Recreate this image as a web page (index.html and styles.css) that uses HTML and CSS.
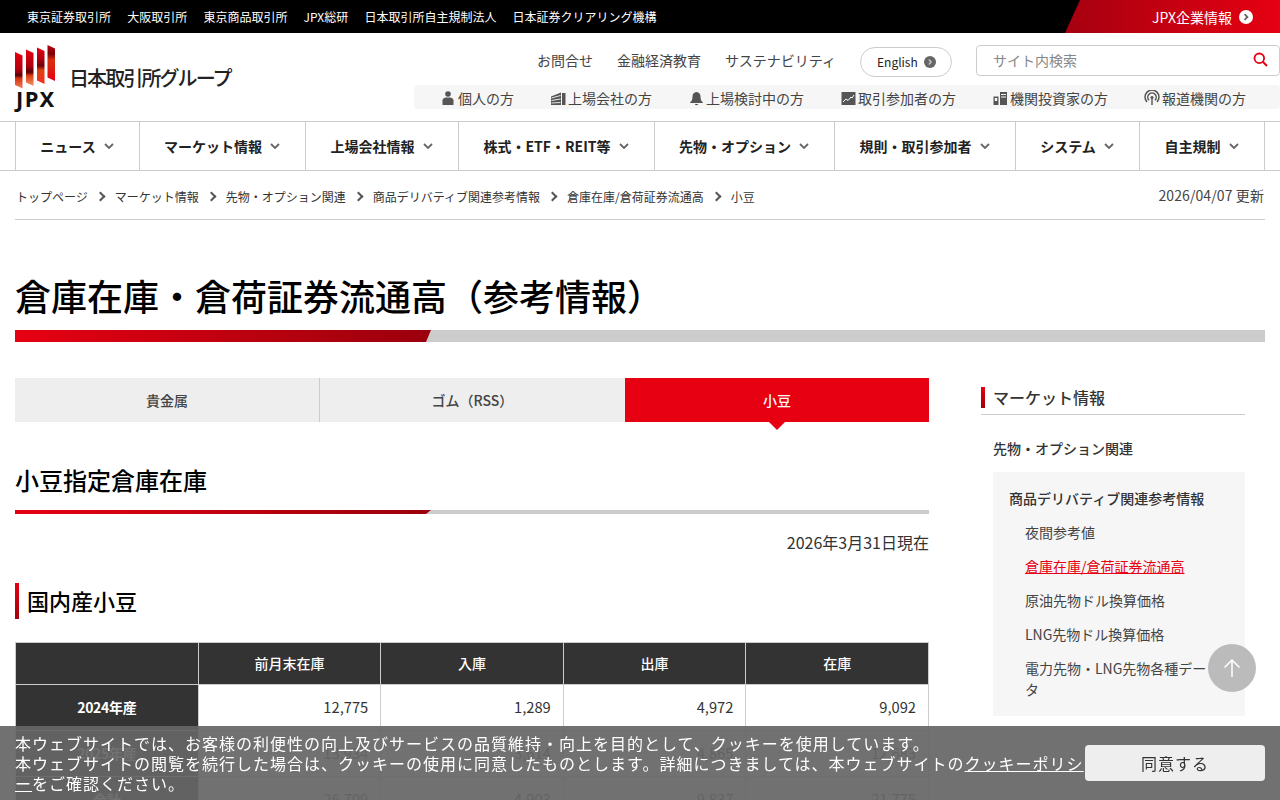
FILE: index.html
```html
<!DOCTYPE html>
<html lang="ja">
<head>
<meta charset="utf-8">
<title>倉庫在庫・倉荷証券流通高（参考情報）</title>
<link rel="stylesheet" href="styles.css">
</head>
<body>
<svg class="defs" width="0" height="0" aria-hidden="true">
  <defs>
    <linearGradient id="lg1" x1="0" y1="0" x2="0" y2="1"><stop offset="0" stop-color="#e60012"/><stop offset=".5" stop-color="#b00010"/><stop offset=".64" stop-color="#5a0008"/><stop offset=".72" stop-color="#d8300f"/><stop offset="1" stop-color="#f08060"/></linearGradient>
    <linearGradient id="lg2" x1="0" y1="0" x2="0" y2="1"><stop offset="0" stop-color="#e60012"/><stop offset=".45" stop-color="#b00010"/><stop offset=".62" stop-color="#5a0008"/><stop offset=".72" stop-color="#e0400f"/><stop offset="1" stop-color="#f5906a"/></linearGradient>
    <linearGradient id="lg3" x1="0" y1="0" x2="0" y2="1"><stop offset="0" stop-color="#e60012"/><stop offset=".35" stop-color="#a80010"/><stop offset=".5" stop-color="#700008"/><stop offset=".62" stop-color="#e04010"/><stop offset="1" stop-color="#f03020"/></linearGradient>
    <linearGradient id="lg4" x1="0" y1="0" x2="0" y2="1"><stop offset="0" stop-color="#c00010"/><stop offset=".25" stop-color="#7a0008"/><stop offset=".42" stop-color="#d83010"/><stop offset="1" stop-color="#e60012"/></linearGradient>
  </defs>
</svg>
<div class="topbar">
  <ul class="toplinks">
    <li>東京証券取引所</li><li>大阪取引所</li><li>東京商品取引所</li><li>JPX総研</li><li>日本取引所自主規制法人</li><li>日本証券クリアリング機構</li>
  </ul>
  <div class="corp">JPX企業情報
    <svg class="corp-ic" width="14" height="14" viewBox="0 0 14 14"><circle cx="7" cy="7" r="7" fill="#fff"/><path d="M5.600 4.200 8.400 7 5.600 9.800" fill="none" stroke="#666" stroke-width="1.800"/></svg>
  </div>
</div>
<header class="hdr">
  <div class="logo">
    <div class="logo-mark">
      <svg width="40" height="44" viewBox="0 0 40 44">
        <path d="M0 7 7.500 10.500V43.500L0 40Z" fill="url(#lg1)"/>
        <path d="M11 4.500 18.500 8V41L11 37.500Z" fill="url(#lg2)"/>
        <path d="M22 2.500 29.500 6V39L22 35.500Z" fill="url(#lg3)"/>
        <path d="M32.500 0 40 3.500V36L32.500 32.500Z" fill="url(#lg4)"/>
      </svg>
      <span class="logo-jpx">JPX</span>
    </div>
    <span class="logo-name">日本取引所グループ</span>
  </div>
  <div class="hdr-right">
    <div class="util">
      <a class="util-link">お問合せ</a>
      <a class="util-link">金融経済教育</a>
      <a class="util-link">サステナビリティ</a>
      <a class="pill">English
        <svg width="12" height="12" viewBox="0 0 12 12"><circle cx="6" cy="6" r="6" fill="#666"/><path d="M4.800 3.500 7.200 6 4.800 8.500" fill="none" stroke="#ccc" stroke-width="1.300"/></svg>
      </a>
      <div class="search">
        <span class="search-ph">サイト内検索</span>
        <svg width="15" height="15" viewBox="0 0 15 15"><circle cx="6.300" cy="6.300" r="4.800" fill="none" stroke="#e60012" stroke-width="1.800"/><path d="M9.800 9.800 14 14" stroke="#e60012" stroke-width="2" fill="none"/></svg>
      </div>
    </div>
    <ul class="aud">
      <li><svg class="aud-ic" viewBox="0 0 15 15"><circle cx="7" cy="3" r="2.800" fill="#555"/><path d="M1.500 14V9.500C1.500 7.500 3.500 6.500 5 6.500h4c1.500 0 3.500 1 3.500 3V14Z" fill="#555"/></svg>個人の方</li>
      <li><svg class="aud-ic" viewBox="0 0 15 15"><path d="M0 5.500 10 1.500V14H0Z" fill="#555"/><path d="M.5 7 9.500 4.500M.5 9.500 9.500 8M.5 12 9.500 11.500" stroke="#f6f6f6" stroke-width=".9"/><path d="M11 2H14.500V14H11Z" fill="#555"/></svg>上場会社の方</li>
      <li><svg class="aud-ic" viewBox="0 0 15 15"><path d="M7.500 1C4.800 1 3.500 3.200 3.500 5.500 3.500 8.500 2.800 9.800 1.200 11.300V12H13.800V11.300C12.200 9.800 11.500 8.500 11.500 5.500 11.500 3.200 10.200 1 7.500 1Z" fill="#555"/><path d="M5.800 13a1.800 1.800 0 0 0 3.400 0Z" fill="#555"/></svg>上場検討中の方</li>
      <li><svg class="aud-ic" viewBox="0 0 15 15"><rect x=".5" y="1" width="14" height="13" fill="#555"/><path d="M2 11 5 8l2 1.500L10 6l1 1 2-3" fill="none" stroke="#fff" stroke-width="1"/></svg>取引参加者の方</li>
      <li><svg class="aud-ic" viewBox="0 0 15 15"><rect x=".5" y="5.500" width="5" height="8.500" fill="#555"/><rect x="1.800" y="7" width="2.400" height="3" fill="#f6f6f6"/><rect x="7" y="1" width="7" height="13" fill="#555"/><path d="M8 3.500H13M8 6H13" stroke="#f6f6f6" stroke-width="1"/></svg>機関投資家の方</li>
      <li class="aud-last"><svg class="aud-ic aud-ic-wide" viewBox="0 0 16 16"><path d="M3 12A7 7 0 1 1 13 12" fill="none" stroke="#555" stroke-width="1.500"/><path d="M5 10.200A4.200 4.200 0 1 1 11 10.200" fill="none" stroke="#555" stroke-width="1.500"/><circle cx="8" cy="7.500" r="1.600" fill="#555"/><path d="M7.300 8.500H8.700V15H7.300Z" fill="#555"/></svg>報道機関の方</li>
    </ul>
  </div>
</header>
<nav class="gnav">
  <a class="gnav-i">ニュース<svg class="chev" viewBox="0 0 10 6"><path d="M1 1 5 5 9 1" fill="none" stroke="#666" stroke-width="1.800"/></svg></a>
  <a class="gnav-i">マーケット情報<svg class="chev" viewBox="0 0 10 6"><path d="M1 1 5 5 9 1" fill="none" stroke="#666" stroke-width="1.800"/></svg></a>
  <a class="gnav-i">上場会社情報<svg class="chev" viewBox="0 0 10 6"><path d="M1 1 5 5 9 1" fill="none" stroke="#666" stroke-width="1.800"/></svg></a>
  <a class="gnav-i">株式・ETF・REIT等<svg class="chev" viewBox="0 0 10 6"><path d="M1 1 5 5 9 1" fill="none" stroke="#666" stroke-width="1.800"/></svg></a>
  <a class="gnav-i">先物・オプション<svg class="chev" viewBox="0 0 10 6"><path d="M1 1 5 5 9 1" fill="none" stroke="#666" stroke-width="1.800"/></svg></a>
  <a class="gnav-i">規則・取引参加者<svg class="chev" viewBox="0 0 10 6"><path d="M1 1 5 5 9 1" fill="none" stroke="#666" stroke-width="1.800"/></svg></a>
  <a class="gnav-i">システム<svg class="chev" viewBox="0 0 10 6"><path d="M1 1 5 5 9 1" fill="none" stroke="#666" stroke-width="1.800"/></svg></a>
  <a class="gnav-i gnav-last">自主規制<svg class="chev" viewBox="0 0 10 6"><path d="M1 1 5 5 9 1" fill="none" stroke="#666" stroke-width="1.800"/></svg></a>
</nav>
<div class="crumbs">
  <ol class="crumb-list">
    <li>トップページ</li><li>マーケット情報</li><li>先物・オプション関連</li><li>商品デリバティブ関連参考情報</li><li>倉庫在庫/倉荷証券流通高</li><li>小豆</li>
  </ol>
  <div class="updated">2026/04/07 更新</div>
</div>
<h1 class="title">倉庫在庫・倉荷証券流通高（参考情報）</h1>
<div class="bar bar-lg"><div class="bar-fill"></div></div>
<div class="content">
  <main class="main">
    <div class="tabs">
      <a class="tab">貴金属</a>
      <a class="tab">ゴム（RSS）</a>
      <a class="tab tab-on">小豆</a>
    </div>
    <h2 class="h2">小豆指定倉庫在庫</h2>
    <div class="bar bar-sm"><div class="bar-fill"></div></div>
    <p class="asof">2026年3月31日現在</p>
    <h3 class="h3">国内産小豆</h3>
    <table class="tbl">
      <thead><tr><th></th><th>前月末在庫</th><th>入庫</th><th>出庫</th><th>在庫</th></tr></thead>
      <tbody>
        <tr><th>2024年産</th><td>12,775</td><td>1,289</td><td>4,972</td><td>9,092</td></tr>
        <tr><th>2025年産</th><td>13,934</td><td>3,614</td><td>4,865</td><td>12,683</td></tr>
        <tr><th>合計</th><td>26,709</td><td>4,903</td><td>9,837</td><td>21,775</td></tr>
      </tbody>
    </table>
  </main>
  <aside class="side">
    <div class="side-t">マーケット情報</div>
    <div class="side-s">先物・オプション関連</div>
    <div class="side-box">
      <div class="side-h">商品デリバティブ関連参考情報</div>
      <ul class="side-list">
        <li>夜間参考値</li>
        <li class="side-cur">倉庫在庫/倉荷証券流通高</li>
        <li>原油先物ドル換算価格</li>
        <li>LNG先物ドル換算価格</li>
        <li>電力先物・LNG先物各種データ</li>
      </ul>
    </div>
  </aside>
</div>
<a class="totop"><svg width="20" height="20" viewBox="0 0 20 20"><path d="M10 19V2M2.500 9.500 10 2l7.500 7.500" fill="none" stroke="#fff" stroke-width="1.500"/></svg></a>
<div class="cookie">
  <p class="cookie-txt">本ウェブサイトでは、お客様の利便性の向上及びサービスの品質維持・向上を目的として、クッキーを使用しています。<br>本ウェブサイトの閲覧を続行した場合は、クッキーの使用に同意したものとします。詳細につきましては、本ウェブサイトの<a class="cookie-a">クッキーポリシー</a>をご確認ください。</p>
  <button class="cookie-btn">同意する</button>
</div>
</body>
</html>
```
FILE: styles.css
```css
* { box-sizing: border-box; }
html, body { margin: 0; padding: 0; }
body { font-family: "Noto Sans CJK JP", "Noto Sans", sans-serif; font-size: 14px; color: #333; background: #fff; }
ul, ol { list-style: none; margin: 0; padding: 0; }
.defs { position: absolute; }

.topbar { height: 33px; background: #000; display: flex; justify-content: space-between; color: #fff; }
.toplinks { display: flex; gap: 16.2px; padding-left: 27px; font-size: 12px; line-height: 33px; }
.corp { width: 215px; height: 33px; display: flex; align-items: center; justify-content: flex-end; gap: 7px; padding-right: 27px; font-size: 14px;
  background: linear-gradient(90deg, #a50010, #e60012); clip-path: polygon(15px 0, 100% 0, 100% 100%, 0 100%); }
.corp-ic { flex: none; }

.hdr { height: 89px; border-bottom: 1px solid #ccc; display: flex; }
.logo { width: 414px; display: flex; padding: 12px 0 0 15px; }
.logo-mark { width: 40px; display: flex; flex-direction: column; }
.logo-jpx { font-size: 22px; font-weight: 700; line-height: 18px; color: #111; letter-spacing: 1.5px; margin: 0 -4px 0 1px; font-family: "Noto Sans", sans-serif; }
.logo-name { font-size: 20px; font-weight: 500; letter-spacing: -1.9px; line-height: 22px; margin: 22px 0 0 14px; color: #222; white-space: nowrap; }
.hdr-right { width: 866px; padding-top: 12px; }
.util { height: 31px; display: flex; align-items: center; justify-content: flex-end; gap: 24px; }
.util-link { color: #444; font-size: 14px; line-height: 31px; }
.pill { width: 92px; height: 30px; border: 1px solid #ccc; border-radius: 15px; display: flex; align-items: center; gap: 6px; padding-left: 16px; font-size: 12px; color: #222; margin: 2px 0 0 0; }
.search { width: 304px; height: 31px; border: 1px solid #ccc; border-radius: 4px; display: flex; align-items: center; justify-content: space-between; padding: 0 11px 2px 16px; }
.search-ph { color: #888; font-size: 14px; }
.aud { height: 24px; margin-top: 9px; padding-top: 2px; background: #f6f6f6; border-radius: 4px; display: flex; gap: 37px; padding-left: 27px; align-items: center; font-size: 14px; color: #444; white-space: nowrap; }
.aud li { display: flex; align-items: center; }
.aud-last { margin-left: -1px; }
.aud-ic { width: 15px; height: 15px; margin-right: 2px; flex: none; }
.aud-ic-wide { width: 16px; height: 16px; }

.gnav { height: 49px; border-bottom: 1px solid #ccc; margin: 0; padding-left: 15px; display: grid; grid-template-columns: 124px 166px 153px 196px 180px 181px 124px 125px; }
.gnav-i { border-left: 1px solid #ccc; display: flex; align-items: center; justify-content: center; gap: 8px; padding-right: 1px; font-size: 14px; font-weight: 700; color: #222; white-space: nowrap; }
.gnav-last { border-right: 1px solid #ccc; width: 126px; }
.chev { width: 10px; height: 6px; flex: none; }

.crumbs { margin: 0 15px; height: 49px; border-bottom: 1px solid #ccc; display: flex; justify-content: space-between; align-items: center; padding-top: 3px; }
.crumb-list { display: flex; font-size: 12px; color: #333; padding-left: 1px; }
.crumb-list li { display: flex; align-items: center; }
.crumb-list li + li::before { content: ""; width: 5px; height: 5px; border-top: 2px solid #555; border-right: 2px solid #555; transform: rotate(45deg); margin: 0 11px 0 9px; }
.updated { font-size: 14px; color: #444; margin: -4px 1px 0 0; letter-spacing: .1px; }

.title { margin: 45px 15px 0; font-size: 36px; font-weight: 500; line-height: 60px; color: #000; }
.bar { background: #ccc; margin: 0 15px; }
.bar-lg { height: 12px; margin-top: 5px; }
.bar-sm { height: 4px; margin: 0; }
.bar-fill { width: 416px; height: 100%; background: linear-gradient(90deg, #e60012, #9a000c); clip-path: polygon(0 0, 100% 0, calc(100% - 5px) 100%, 0 100%); }

.content { display: grid; grid-template-columns: 914px 264px; gap: 52px; margin: 36px 0 0 15px; }
.tabs { display: grid; grid-template-columns: 305px 305px 304px; height: 44px; }
.tab { background: #eee; display: flex; align-items: center; justify-content: center; color: #444; font-weight: 500; font-size: 14px; position: relative; padding-bottom: 1px; }
.tab:first-child { border-right: 1px solid #ccc; }
.tab-on { background: #e60012; color: #fff; }
.tab-on::after { content: ""; position: absolute; left: 50%; top: 100%; margin-left: -8px; border: 8px solid transparent; border-top-color: #e60012; border-bottom-width: 0; }
.h2 { margin: 38px 0 0; font-size: 24px; font-weight: 500; line-height: 40px; color: #000; height: 50px; }
.asof { margin: 14px 0 0; text-align: right; font-size: 16px; line-height: 28px; color: #333; }
.h3 { margin: 27px 0 0; height: 36px; border-left: 4px solid #d00010; border-image: linear-gradient(#e60012, #a0000c) 1; padding-left: 8px; font-size: 22px; font-weight: 500; line-height: 34px; color: #000; }
.tbl { width: 914px; margin-top: 23px; border-collapse: collapse; table-layout: fixed; border: 1px solid #ccc; }
.tbl thead th { height: 42px; padding: 0 0 2px; background: #333; color: #fff; font-size: 14px; font-weight: 500; border: 1px solid #ccc; }
.tbl tbody th { background: #333; color: #fff; font-size: 14px; font-weight: 700; letter-spacing: -.3px; border: 1px solid #ccc; border-top-color: #555; height: 46px; padding: 0 0 2px; }
.tbl td { text-align: right; padding: 0 12px 2px; font-size: 14.7px; border: 1px solid #ccc; height: 46px; color: #333; }

.side { padding-top: 9px; }
.side-t { height: 28px; line-height: 20px; font-size: 16px; font-weight: 500; color: #333; padding-left: 12px; border-bottom: 1px solid #ccc; position: relative; }
.side-t::before { content: ""; position: absolute; left: 0; top: 0; width: 4px; height: 21px; background: linear-gradient(#e60012, #a0000c); }
.side-s { margin: 23px 0 0 12px; font-size: 14px; font-weight: 500; line-height: 21px; }
.side-box { margin: 13px 0 0 12px; background: #f6f6f6; padding: 16px 32px 16px 16px; height: 244px; }
.side-h { font-size: 14px; font-weight: 500; line-height: 21px; white-space: nowrap; }
.side-list { padding-left: 16px; margin-top: 2px; }
.side-list li { margin-top: 13px; line-height: 21px; color: #444; }
.side-cur { color: #e60012 !important; text-decoration: underline; }

.totop { position: fixed; left: 1208px; top: 644px; width: 48px; height: 48px; border-radius: 50%; background: #bbb; display: flex; align-items: center; justify-content: center; }

.cookie { position: fixed; left: 0; right: 0; bottom: 0; height: 74px; background: rgba(102, 102, 102, .93); display: flex; align-items: center; padding: 0 15px; }
.cookie-txt { margin: 0; width: 1070px; font-size: 16px; line-height: 20px; letter-spacing: 1px; color: #fff; flex: none; }
.cookie-a { text-decoration: underline; }
.cookie-btn { width: 180px; height: 36px; border: 0; border-radius: 4px; background: #eee; color: #333; font: inherit; font-size: 16px; letter-spacing: 1px; }
```
